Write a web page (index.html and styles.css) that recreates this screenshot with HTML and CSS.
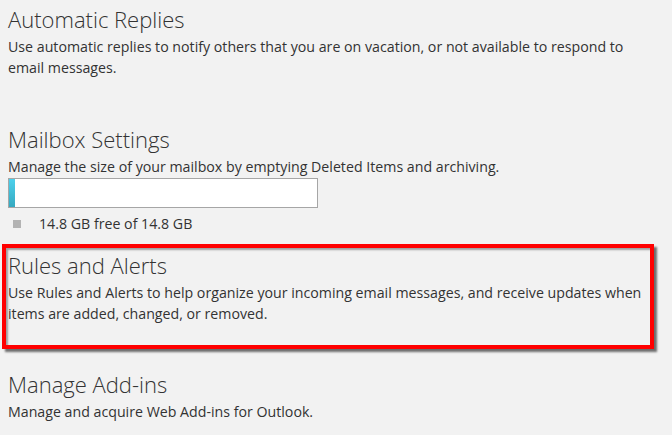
FILE: index.html
```html
<!DOCTYPE html>
<html lang="en">
<head>
<meta charset="utf-8">
<title>Options</title>
<link rel="stylesheet" href="styles.css">
</head>
<body>
<main class="page">
  <section class="group group-auto">
    <h2 class="title">Automatic Replies</h2>
    <p class="desc">Use automatic replies to notify others that you are on vacation, or not available to respond to email messages.</p>
  </section>

  <section class="group group-mailbox">
    <h2 class="title">Mailbox Settings</h2>
    <p class="desc">Manage the size of your mailbox by emptying Deleted Items and archiving.</p>
    <div class="quota-bar"><div class="quota-fill" style="width: 6px"></div></div>
    <div class="quota-legend"><span class="swatch"></span><span class="quota-text">14.8 GB free of 14.8 GB</span></div>
  </section>

  <section class="group group-rules highlighted">
    <h2 class="title">Rules and Alerts</h2>
    <p class="desc">Use Rules and Alerts to help organize your incoming email messages, and receive updates when items are added, changed, or removed.</p>
  </section>

  <section class="group group-addins">
    <h2 class="title">Manage Add-ins</h2>
    <p class="desc">Manage and acquire Web Add-ins for Outlook.</p>
  </section>
</main>
</body>
</html>
```

FILE: styles.css
```css
html, body {
  margin: 0;
  padding: 0;
  background: #f2f2f2;
}
body {
  font-family: "Open Sans", "Noto Sans", "DejaVu Sans", sans-serif;
  color: #333333;
  overflow: hidden;
  height: 435px;
}
.page {
  display: flex;
  flex-direction: column;
  padding: 0 24px 0 8px;
}
.title {
  margin: 0;
  font-weight: 300;
  font-size: 22px;
  line-height: 30px;
  color: #333333;
}
.desc {
  margin: 2px 0 0 0;
  font-size: 14.2px;
  line-height: 21px;
  color: #333333;
}
.group-auto {
  padding-top: 4px;
}
.group-mailbox {
  margin-top: 46px;
}
.quota-bar {
  margin-top: 1px;
  width: 308px;
  height: 28px;
  background: #ffffff;
  border: 1px solid #a6a6a6;
  display: flex;
}
.quota-fill {
  height: 100%;
  background: linear-gradient(#4cd0ec, #36a9c0);
}
.quota-legend {
  display: flex;
  align-items: center;
  margin-top: 5px;
  height: 21px;
  font-size: 14.2px;
}
.swatch {
  width: 8px;
  height: 8px;
  background: #b3b3b3;
  margin-left: 5px;
  margin-right: 18px;
}
.group-rules {
  margin: 10px -6px 0 -6px;
  padding: 2px 0 21px 2px;
}
.highlighted {
  border: 4px solid #ff0000;
  box-shadow: 3px 3px 2px rgba(0,0,0,0.55), inset 2px 2px 2px rgba(0,0,0,0.35);
}
.group-addins {
  margin-top: 20px;
}
```
